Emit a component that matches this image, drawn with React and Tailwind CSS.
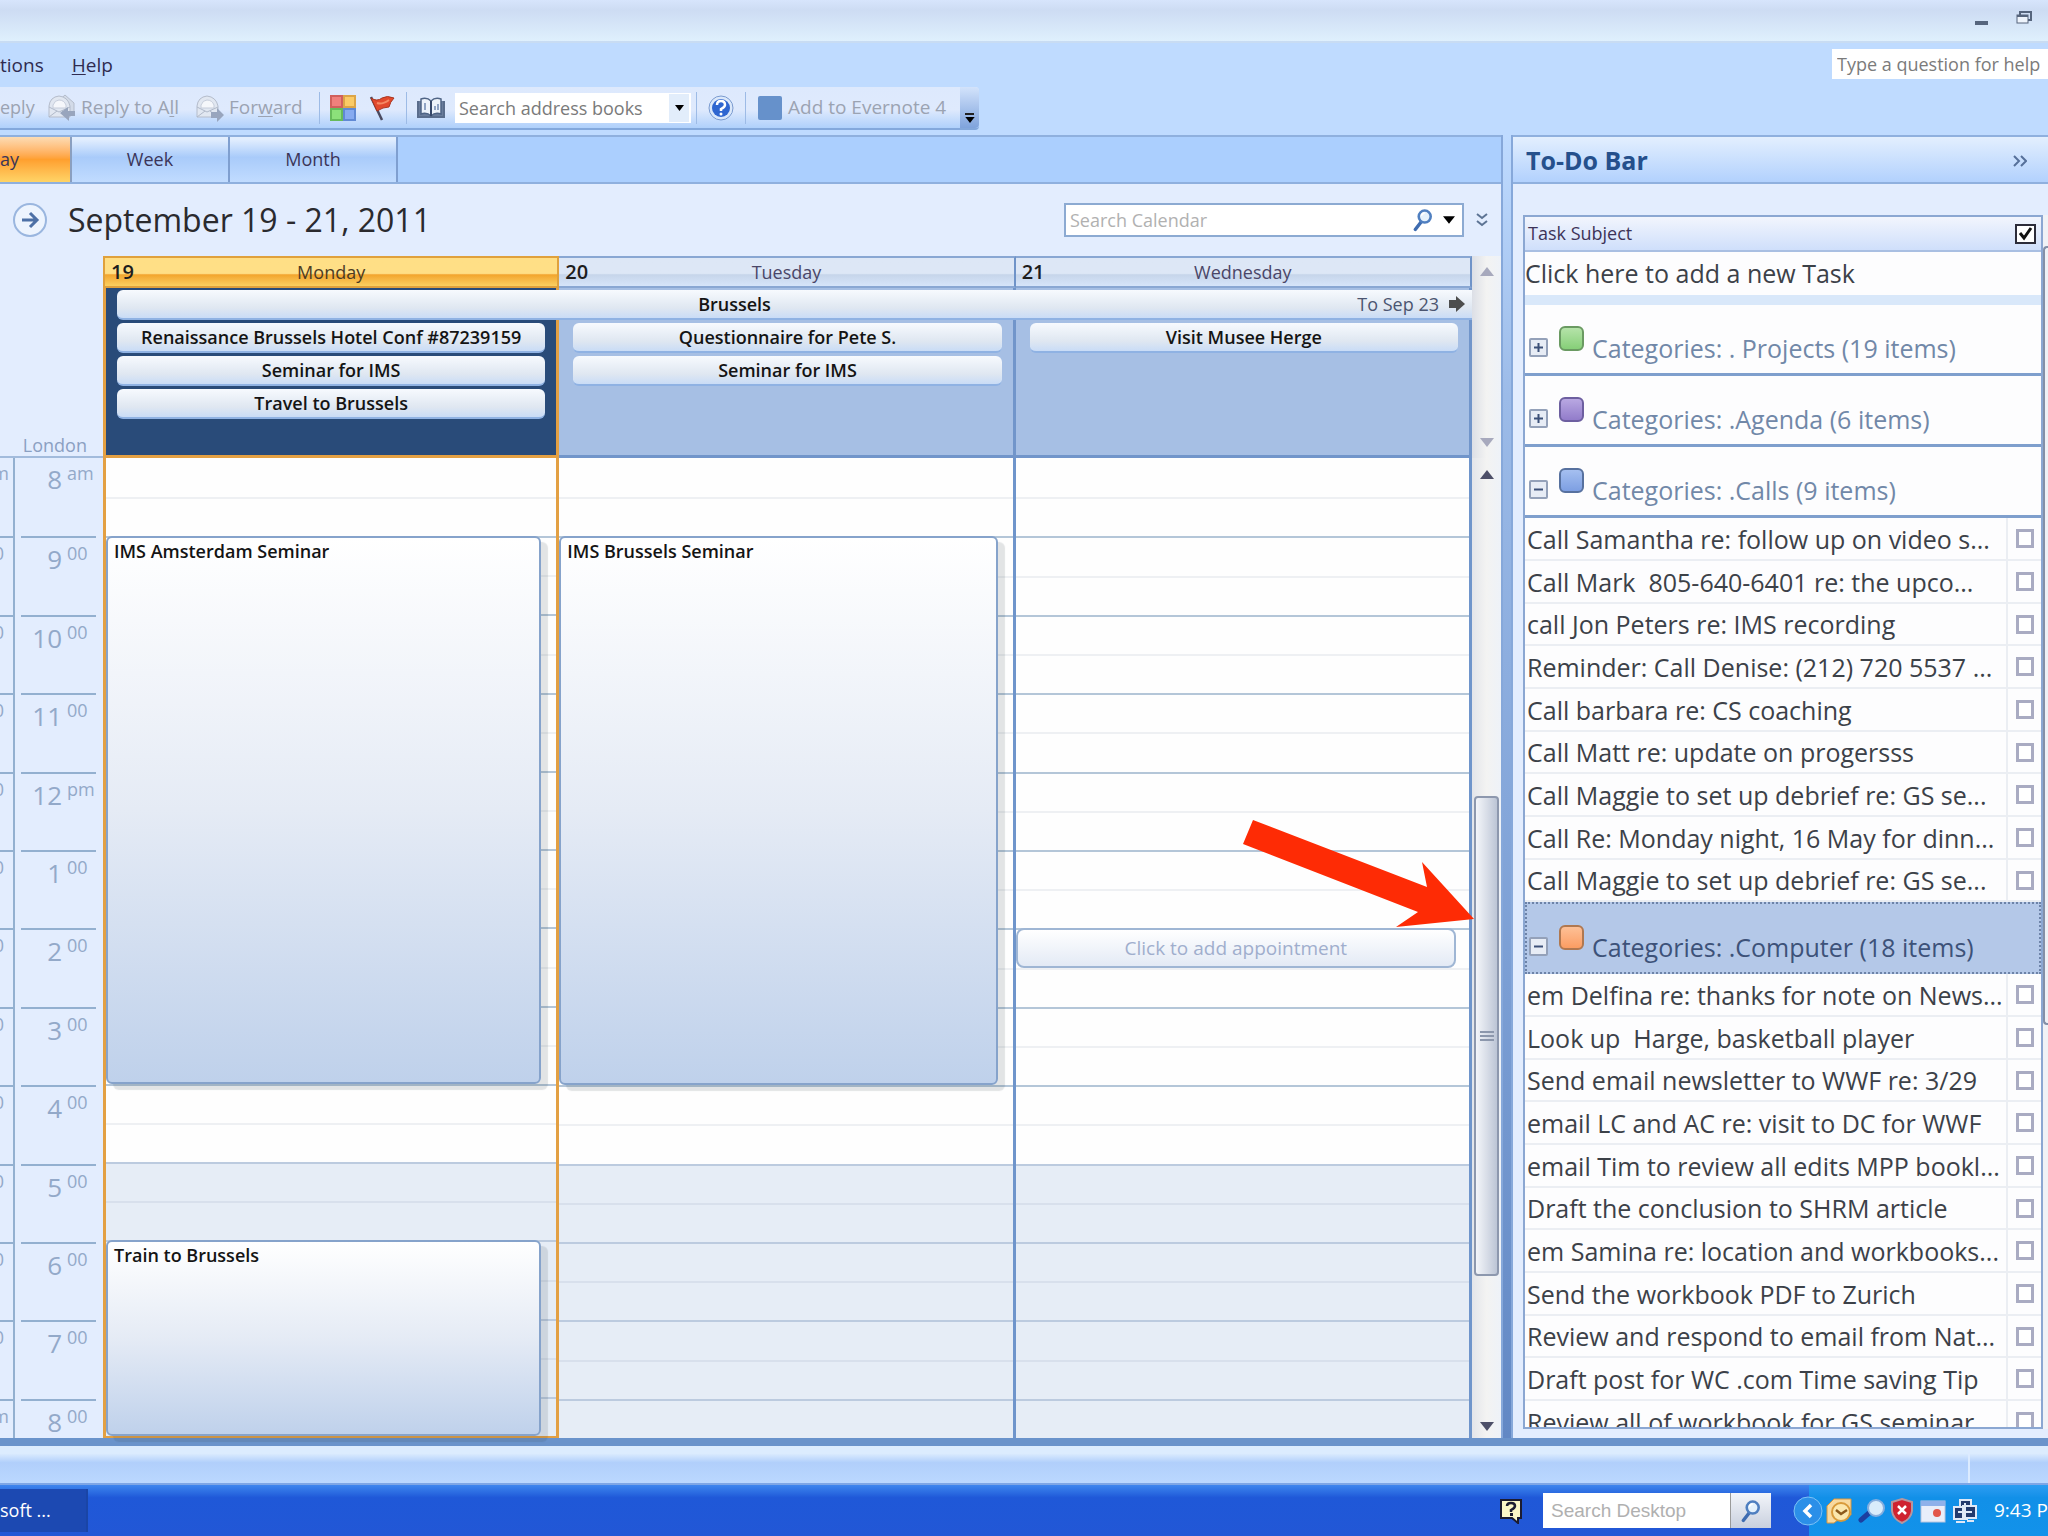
import React from 'react';

const HOURS = [
  ['8', 'am'], ['9', '00'], ['10', '00'], ['11', '00'], ['12', 'pm'], ['1', '00'], ['2', '00'],
  ['3', '00'], ['4', '00'], ['5', '00'], ['6', '00'], ['7', '00'], ['8', '00'],
];

// the neighbouring time zone is cut off by the window edge
const STUBS = ['am', '00', '00', '00', '00', '00', '00', '00', '00', '00', '00', '00', 'pm'];

const SLOTS = Array.from({ length: 25 }, (_, i) => i);

const CALLS = [
  'Call Samantha re: follow up on video s...',
  'Call Mark  805-640-6401 re: the upco...',
  'call Jon Peters re: IMS recording',
  'Reminder: Call Denise: (212) 720 5537 ...',
  'Call barbara re: CS coaching',
  'Call Matt re: update on progersss',
  'Call Maggie to set up debrief re: GS se...',
  'Call Re: Monday night, 16 May for dinn...',
  'Call Maggie to set up debrief re: GS se...',
];

const COMPUTER = [
  'em Delfina re: thanks for note on News...',
  'Look up  Harge, basketball player',
  'Send email newsletter to WWF re: 3/29',
  'email LC and AC re: visit to DC for WWF',
  'email Tim to review all edits MPP bookl...',
  'Draft the conclusion to SHRM article',
  'em Samina re: location and workbooks...',
  'Send the workbook PDF to Zurich',
  'Review and respond to email from Nat...',
  'Draft post for WC .com Time saving Tip',
  'Review all of workbook for GS seminar',
];

const Separator = () => <div className="h-8 w-px shrink-0 bg-[#9dbbe6]"></div>;

const Triangle = ({ up, className }) => (
  <svg viewBox="0 0 14 9" className={className} fill="currentColor">
    <path d={up ? 'M7 0 L14 9 H0 Z' : 'M7 9 L14 0 H0 Z'} />
  </svg>
);

const Envelope = ({ all }) => (
  <svg viewBox="0 0 28 28" className="h-7 w-7 shrink-0">
    {all && <path d="M8 9 L17 1 L26 9 V20 H8 Z" fill="#d3dbe8" stroke="#b4bccb" />}
    <path d="M1 12 Q2 3 11 2 Q20 3 22 12 V23 H1 Z" fill="#e1e7f1" stroke="#b4bccb" />
    <path d="M5 11 Q7 6 11 6 Q16 6 18 11 V14 H5 Z" fill="#f5f7fb" stroke="#c6cddb" />
    <path d="M1 13 L11 18 L22 13 M1 23 L9 17 M22 23 L14 17" fill="none" stroke="#b0b9c9" />
    {all ? (
      <path d="M12 19 L20 13 V17 H27 V22 H21 V27 Z" fill="#98a5bd" />
    ) : (
      <path d="M28 21 L21 14 V18 H15 V24 H21 V28 Z" fill="#98a5bd" />
    )}
  </svg>
);

const Magnifier = ({ className }) => (
  <svg viewBox="0 0 24 28" className={className}>
    <path d="M3 25 L10 16" stroke="#3f6cb0" strokeWidth="4" strokeLinecap="round" />
    <circle cx="14" cy="10" r="7" fill="#e4f1fc" stroke="#4f7fc0" strokeWidth="3" />
    <path d="M10 9 Q11 6 14 6" stroke="#ffffff" strokeWidth="2" fill="none" />
  </svg>
);

const TitleBar = () => (
  <header className="flex h-[41px] shrink-0 items-start justify-end gap-[28px] bg-linear-to-b from-[#d7e5fc] via-[#cddcf3] via-25% to-[#dff0fd] pr-4">
    <button aria-label="Minimize" className="mt-[21px] h-[4px] w-[13px] bg-[#56657d]"></button>
    <button aria-label="Restore" className="mt-[11px]">
      <svg viewBox="0 0 16 13" className="h-[13px] w-4">
        <path d="M4 4 V1 H15 V9 H12" fill="none" stroke="#56657d" strokeWidth="2" />
        <rect x="1" y="4" width="11" height="8" fill="#eef4fc" stroke="#56657d" />
        <rect x="1" y="4" width="11" height="2" fill="#56657d" />
      </svg>
    </button>
  </header>
);

const MenuBar = () => (
  <nav className="flex h-[46px] shrink-0 items-center justify-between border-t-2 border-[#c8dcf3] text-[19px] text-[#2f2b50]">
    <div className="flex gap-7">
      <button>tions</button>
      <button><span className="underline underline-offset-2">H</span>elp</button>
    </div>
    <input
      aria-label="Help search"
      placeholder="Type a question for help"
      className="mb-[2px] h-[30px] w-[216px] bg-white pl-[5px] text-[18px] placeholder:text-[#7b7b7b]"
    />
  </nav>
);

const Toolbar = () => (
  <div className="h-[48px] shrink-0">
    <div className="flex h-[43px] w-[979px] items-center rounded-r-sm border-b-2 border-[#83a8dc] bg-linear-to-b from-[#dde9fd] via-[#dfeafd] via-55% to-[#afd0fb] text-[19px] text-[#9ba3b2]">
      <button className="w-12 text-left text-[18px]">eply</button>
      <button className="flex w-[148px] items-center gap-[5px] whitespace-nowrap">
        <Envelope all />
        <span>Reply to A<span className="underline underline-offset-2">l</span>l</span>
      </button>
      <button className="flex w-[123px] items-center gap-[5px]">
        <Envelope />
        <span>For<span className="underline underline-offset-2">w</span>ard</span>
      </button>
      <Separator />
      <button aria-label="Categorize" className="ml-[10px]">
        <svg viewBox="0 0 26 26" className="h-[26px] w-[26px]">
          <rect x="1" y="1" width="11" height="11" fill="#f0807c" stroke="#d0605c" strokeWidth="2" />
          <rect x="14" y="1" width="11" height="11" fill="#fbcb66" stroke="#dca548" strokeWidth="2" />
          <rect x="1" y="14" width="11" height="11" fill="#8ce07a" stroke="#66ba5a" strokeWidth="2" />
          <rect x="14" y="14" width="11" height="11" fill="#86aaf0" stroke="#6089d4" strokeWidth="2" />
        </svg>
      </button>
      <button aria-label="Follow up" className="mr-[11px] ml-[13px]">
        <svg viewBox="0 0 26 26" className="h-[26px] w-[26px]">
          <path d="M2 2 L13 25" stroke="#4a4a60" strokeWidth="2.5" />
          <path d="M2 3 Q8 7 13 3 Q18 0 25 3 Q21 7 20 12 Q14 12 8 16 Z" fill="#e2492c" stroke="#a83520" />
          <path d="M8 8 Q13 10 20 5" stroke="#f58a64" strokeWidth="2" fill="none" />
        </svg>
      </button>
      <Separator />
      <button aria-label="Address book" className="mx-[10px]">
        <svg viewBox="0 0 28 24" className="h-6 w-7">
          <path d="M1 5 V21 H27 V5" fill="#6a7d9c" stroke="#5a6d8c" strokeWidth="2" />
          <path d="M4 3 Q10 1 14 5 Q18 1 24 3 V18 Q18 16 14 20 Q10 16 4 18 Z" fill="#edf3fb" stroke="#4f6485" strokeWidth="1.5" />
          <path d="M14 5 V20" stroke="#36486a" strokeWidth="2" />
          <path d="M8 7 V14 M18 10 V14 M21 8 V14" stroke="#90a4c4" strokeWidth="2" />
        </svg>
      </button>
      <div className="flex h-[30px] w-[236px] items-center bg-white">
        <input
          aria-label="Search address books"
          placeholder="Search address books"
          className="h-full w-[214px] pl-[4px] text-[18px] placeholder:text-[#7a7a7a]"
        />
        <button aria-label="Show address books" className="flex h-[28px] w-[20px] items-center justify-center bg-[#e2edfb] text-black">
          <Triangle className="h-[6px] w-[9px]" />
        </button>
      </div>
      <div className="ml-[5px]"><Separator /></div>
      <button aria-label="Help" className="mx-[11px]">
        <svg viewBox="0 0 26 26" className="h-[26px] w-[26px]">
          <circle cx="13" cy="13" r="12" fill="#dbe8fa" stroke="#7a9bd0" />
          <circle cx="13" cy="13" r="9" fill="#2f66d0" />
          <path d="M9 10 Q9 6 13 6 Q17 6 17 10 Q17 12 13 14 V16" stroke="#ffffff" strokeWidth="2.5" fill="none" />
          <circle cx="13" cy="19" r="1.5" fill="#ffffff" />
        </svg>
      </button>
      <Separator />
      <button className="ml-3 flex flex-1 items-center gap-[6px] whitespace-nowrap">
        <span className="h-6 w-6 rounded-xs bg-[#6691cb]"></span>
        Add to Evernote 4
      </button>
      <button aria-label="Toolbar options" className="flex h-full w-[19px] flex-col items-center justify-end gap-[2px] rounded-r-sm bg-linear-to-b from-[#d3e3fb] to-[#7fa3dc] pb-[5px] text-black">
        <span className="h-[2px] w-[9px] bg-[#222]"></span>
        <Triangle className="h-[6px] w-[10px]" />
      </button>
    </div>
  </div>
);

const AllDay = ({ className, children }) => (
  <button className={`z-10 mt-[2px] h-[30px] rounded-md border-b-2 border-[#8fb2e3] bg-linear-to-b from-[#f7fafe] via-[#dfe7f1] via-65% to-[#c9dcf6] text-center text-[18px] leading-[28px] font-semibold whitespace-nowrap text-[#141414] ${className}`}>
    {children}
  </button>
);

const Appointment = ({ className, children }) => (
  <button className={`z-10 mr-[15px] flex items-start rounded-md border-2 border-[#86a3cb] bg-linear-to-b from-white via-[#e5ebf5] to-[#bfd1eb] px-[6px] text-left text-[18px] leading-[26px] font-semibold text-[#141414] shadow-[7px_6px_1px_rgba(60,70,80,0.14)] ${className}`}>
    {children}
  </button>
);

const DayHeader = ({ number, name, today }) => (
  <div
    className={
      today
        ? 'relative h-8 border-2 border-[#e0a13c] bg-linear-to-b from-[#ffdf86] from-55% via-[#f2a52c] via-60% to-[#fbd060] text-center text-[18px] leading-[28px] text-[#4c3b24]'
        : 'relative h-8 border-t-2 border-r-2 border-b-2 border-[#89a7d3] border-r-[#6f93c8] bg-linear-to-b from-[#dde7f6] from-55% via-[#c6d5ea] via-60% to-[#d6e5fa] text-center text-[18px] leading-[28px] text-[#4a4668]'
    }
  >
    <span className="absolute left-[6px] text-[20px] font-semibold text-[#1d1d1d]">{number}</span>
    {name}
  </div>
);

// half-hour lines of one day, the working hours stop at slot 18
const slotClass = (i) => {
  const work = i < 18;
  if (i === 0) return 'bg-[#fefefe]';
  if (i % 2) {
    return work ? 'border-t-2 border-[#eef0f3] bg-[#fefefe]' : 'border-t-2 border-[#d8e0ec] bg-[#e6edf6]';
  }
  return work ? 'border-t-2 border-[#b4c6d8] bg-[#fefefe]' : 'border-t-2 border-[#bccbdf] bg-[#e6edf6]';
};

const DayColumn = ({ today, children }) => (
  <div
    className={
      today
        ? 'grid min-h-0 grid-rows-[repeat(25,minmax(0,1fr))] border-x-[3px] border-b-2 border-[#e3a043]'
        : 'grid min-h-0 grid-rows-[repeat(25,minmax(0,1fr))] border-r-3 border-[#6f95cb]'
    }
  >
    {SLOTS.map((i) => (
      <div key={i} style={{ gridRow: i + 1, gridColumn: 1 }} className={slotClass(i)}></div>
    ))}
    {children}
  </div>
);

const Calendar = () => (
  <section className="flex min-w-0 flex-1 flex-col border-r-2 border-[#86a8da] bg-[#e3edfe]">
    <div className="flex h-[49px] shrink-0 border-y-2 border-[#8fb0de] bg-[#abcffe] text-[18px] text-[#3b3558]">
      <button className="w-[72px] border-r-2 border-[#8a9fc0] bg-linear-to-b from-[#fcdcb4] via-[#ff9f2e] via-50% to-[#ffd466] text-left">ay</button>
      <button className="w-[158px] border-r-2 border-[#7f9fd0] bg-linear-to-b from-[#e2eefe] from-5% via-[#a9cbfa] via-45% to-[#c1dcff]">Week</button>
      <button className="w-[168px] border-r-2 border-[#7f9fd0] bg-linear-to-b from-[#e2eefe] from-5% via-[#a9cbfa] via-45% to-[#c1dcff]">Month</button>
    </div>

    <div className="flex h-[72px] shrink-0 items-center pl-3">
      <button aria-label="Next days">
        <svg viewBox="0 0 36 36" className="h-9 w-9">
          <circle cx="18" cy="18" r="16" fill="#edf4fe" stroke="#9ab6df" strokeWidth="2" />
          <path d="M10 18 H25 M18 11 L25 18 L18 25" stroke="#4d70a6" strokeWidth="3" fill="none" />
        </svg>
      </button>
      <h1 className="ml-5 flex-1 text-[32px] text-[#2a2a2e]">September 19 - 21, 2011</h1>
      <div className="flex h-[34px] w-[400px] items-center border-2 border-[#8caad2] bg-white">
        <input
          aria-label="Search Calendar"
          placeholder="Search Calendar"
          className="min-w-0 flex-1 pl-[4px] text-[18px] placeholder:text-[#b1b1b1]"
        />
        <button aria-label="Search"><Magnifier className="h-6 w-[22px]" /></button>
        <button aria-label="Search options" className="mr-[7px] ml-[9px] text-black"><Triangle className="h-2 w-3" /></button>
      </div>
      <button aria-label="Expand search" className="mr-[13px] ml-[12px]">
        <svg viewBox="0 0 12 14" className="h-[14px] w-3">
          <path d="M1 1 L6 5 L11 1 M1 8 L6 12 L11 8" fill="none" stroke="#5d7494" strokeWidth="2" />
        </svg>
      </button>
    </div>

    <div className="grid shrink-0 grid-cols-[103px_minmax(0,1fr)_29px]">
      <div className="flex items-end justify-end border-b-2 border-[#a2bbdc] pr-4 text-[18px] leading-[22px] text-[#8ba0c2]">London</div>
      <div>
        <div className="grid grid-cols-3">
          <DayHeader number="19" name="Monday" today />
          <DayHeader number="20" name="Tuesday" />
          <DayHeader number="21" name="Wednesday" />
        </div>
        <div className="grid h-[170px] grid-cols-3 grid-rows-[repeat(4,30px)_1fr] gap-y-[3px]">
          <div className="col-start-1 row-span-full row-start-1 border-x-[3px] border-b-3 border-[#e3a043] bg-[#294b79]"></div>
          <div className="col-start-2 row-span-full row-start-1 border-r-3 border-b-3 border-[#7195ca] bg-[#a6bfe4]"></div>
          <div className="col-start-3 row-span-full row-start-1 border-r-3 border-b-3 border-[#7195ca] bg-[#a6bfe4]"></div>
          <AllDay className="relative col-span-3 col-start-1 row-start-1 ml-[14px] rounded-r-none pr-[120px]">
            Brussels
            <span className="absolute top-0 right-[7px] flex items-center gap-[10px] font-normal text-[#4b5570]">
              To Sep 23
              <svg viewBox="0 0 16 16" className="h-4 w-4"><path d="M0 4 H7 V0 L16 8 L7 16 V12 H0 Z" fill="#4d4d4d" /></svg>
            </span>
          </AllDay>
          <AllDay className="col-start-1 row-start-2 mx-[14px]">Renaissance Brussels Hotel Conf #87239159</AllDay>
          <AllDay className="col-start-1 row-start-3 mx-[14px]">Seminar for IMS</AllDay>
          <AllDay className="col-start-1 row-start-4 mx-[14px]">Travel to Brussels</AllDay>
          <AllDay className="col-start-2 row-start-2 mx-[14px]">Questionnaire for Pete S.</AllDay>
          <AllDay className="col-start-2 row-start-3 mx-[14px]">Seminar for IMS</AllDay>
          <AllDay className="col-start-3 row-start-2 mx-[14px]">Visit Musee Herge</AllDay>
        </div>
      </div>
      <div className="flex flex-col items-center justify-between bg-linear-to-r from-[#dcdfe6] via-[#f3f3f2] to-[#eef2f8] pt-[11px] pb-[11px] text-[#a7a9bd]">
        <Triangle up className="h-[9px] w-[14px]" />
        <Triangle className="h-[9px] w-[14px]" />
      </div>
    </div>

    <div className="relative grid min-h-0 flex-1 grid-cols-[103px_minmax(0,1fr)_29px]">
      <div className="grid min-h-0 grid-cols-[15px_1fr] grid-rows-[repeat(25,minmax(0,1fr))] text-[#93a9c9]">
        {HOURS.map(([hour, suffix], i) => (
          <React.Fragment key={i}>
            <div
              style={{ gridRow: i === 12 ? '25' : `${i * 2 + 1} / span 2` }}
              className={`col-start-1 flex items-start justify-end border-r-2 border-r-[#93b0d0] pt-[2px] text-[18px] leading-[26px] ${i ? 'border-t-2 border-t-[#93b0d0]' : ''} ${STUBS[i] === '00' ? 'pr-[9px]' : 'pr-[4px]'}`}
            >
              {STUBS[i]}
            </div>
            <div
              style={{ gridRow: i === 12 ? '25' : `${i * 2 + 1} / span 2` }}
              className={`col-start-2 mr-[7px] ml-[6px] flex items-start overflow-hidden ${i ? 'border-t-2 border-[#93b0d0]' : ''}`}
            >
              <span className="w-[41px] pt-1 text-right text-[26px] leading-[34px]">{hour}</span>
              <span className="ml-[5px] pt-[2px] text-[18px] leading-[26px]">{suffix}</span>
            </div>
          </React.Fragment>
        ))}
      </div>
      <div className="grid min-h-0 grid-cols-3">
        <DayColumn today>
          <Appointment className="col-start-1 row-start-3 row-end-17">IMS Amsterdam Seminar</Appointment>
          <Appointment className="col-start-1 row-start-21 row-end-26">Train to Brussels</Appointment>
        </DayColumn>
        <DayColumn>
          <Appointment className="col-start-1 row-start-3 row-end-17">IMS Brussels Seminar</Appointment>
        </DayColumn>
        <DayColumn>
          <button className="z-10 col-start-1 row-start-13 mr-[13px] rounded-lg border-2 border-[#9fb6d4] bg-linear-to-b from-white to-[#e3eaf5] text-[19px] text-[#a0aecd]">
            Click to add appointment
          </button>
        </DayColumn>
      </div>
      <div className="flex min-h-0 flex-col items-center bg-linear-to-r from-[#e3e5ea] via-[#f3f3f2] to-[#eef2f8] text-[#4d4f68]">
        <div className="flex h-6 items-center pt-2"><Triangle up className="h-[9px] w-[14px]" /></div>
        <div className="grow-[315] basis-0"></div>
        <div className="flex w-[25px] grow-[478] basis-0 flex-col items-center justify-center gap-[2px] rounded-sm border-2 border-[#8d98ae] bg-linear-to-r from-[#f4f6fa] via-[#d9dee8] to-[#bcc5d6]">
          <span className="h-[2px] w-[14px] bg-[#8c97ac]"></span>
          <span className="h-[2px] w-[14px] bg-[#8c97ac]"></span>
          <span className="h-[2px] w-[14px] bg-[#8c97ac]"></span>
        </div>
        <div className="grow-[138] basis-0"></div>
        <div className="flex h-6 items-center"><Triangle className="h-[9px] w-[14px]" /></div>
      </div>
      <svg viewBox="0 0 231 108" className="absolute top-[362px] right-[27px] z-20 h-[108px] w-[231px]">
        <path d="M10 0 L184 67 L179 42 L231 99 L153 107 L175 92 L0 24 Z" fill="#fe2b05" />
      </svg>
    </div>
  </section>
);

const SWATCHES = {
  green: 'border-[#6a9a62] bg-linear-to-b from-[#b5e3a9] to-[#86cf78]',
  purple: 'border-[#6d5fa0] bg-linear-to-b from-[#b9a8e2] to-[#927cca]',
  blue: 'border-[#57719f] bg-linear-to-b from-[#a5bff0] to-[#7d9fe2]',
  orange: 'border-[#b07850] bg-linear-to-b from-[#fdc096] to-[#fb9d62]',
};

const Category = ({ color, open, selected, children }) => (
  <tr className={selected ? 'bg-[#b4c8e8]' : ''}>
    <td
      colSpan={2}
      className={
        selected
          ? 'h-[72px] border-2 border-dotted border-[#6d83a8] p-0 text-[#3d5279]'
          : 'h-[71px] border-b-3 border-[#7f9fcd] p-0 pl-[2px] text-[#7188a8]'
      }
    >
      <button className="flex w-full items-center pt-2 pl-[2px] text-[25px]">
        <span className="mt-2 flex h-[19px] w-[19px] items-center justify-center rounded-xs border-2 border-[#94a1b9] bg-[#e7ecf5]">
          <svg viewBox="0 0 11 11" className="h-[11px] w-[11px]">
            <path d={open ? 'M1 5.5 H10' : 'M1 5.5 H10 M5.5 1 V10'} stroke="#3c5078" strokeWidth="2" />
          </svg>
        </span>
        <span className={`mr-[8px] mb-[10px] ml-[11px] h-[25px] w-[25px] rounded-md border-2 ${SWATCHES[color]}`}></span>
        <span className="pt-[10px] leading-[34px]">{children}</span>
      </button>
    </td>
  </tr>
);

const TaskRows = ({ tasks, group }) =>
  tasks.map((task, i) => (
    <tr key={i} className="h-[43px] nth-[3n]:h-[42px]">
      <td className="border-r-2 border-b-2 border-[#ebeef3] p-0 pl-[2px] text-[25px] leading-[34px] whitespace-pre text-[#3c4148]">
        <label htmlFor={`${group}-${i}`}>{task}</label>
      </td>
      <td className="w-[33px] border-b-2 border-[#ebeef3] p-0">
        <input
          type="checkbox"
          id={`${group}-${i}`}
          className="mx-auto block h-[19px] w-[18px] appearance-none border-3 border-[#a9abc2] bg-white"
        />
      </td>
    </tr>
  ));

const TodoBar = () => (
  <aside className="flex w-[537px] shrink-0 flex-col border-l-2 border-[#86a8da] bg-[#e3edfe]">
    <div className="flex h-[49px] shrink-0 items-center justify-between border-y-2 border-[#8fb0de] bg-linear-to-b from-[#e3effe] to-[#b2d1fd] pt-[2px] pr-[21px] pl-[13px]">
      <h2 className="text-[25px] font-bold text-[#25508c]">To-Do Bar</h2>
      <button aria-label="Collapse" className="text-[#56709a]">
        <svg viewBox="0 0 14 12" className="h-3 w-[14px]">
          <path d="M1 1 L6 6 L1 11 M8 1 L13 6 L8 11" fill="none" stroke="currentColor" strokeWidth="2" />
        </svg>
      </button>
    </div>
    <div className="mt-[31px] mb-[9px] ml-[10px] flex min-h-0 flex-1 overflow-hidden">
      <div className="min-w-0 flex-1 overflow-hidden border-2 border-[#8ba7d2] bg-[#fdfdfe]">
        <div className="flex h-[35px] items-center justify-between border-b-2 border-[#a9bfe2] bg-linear-to-b from-[#f2f5fd] to-[#cfdffb] pr-[5px] pl-[3px] text-[18px] text-[#3d3358]">
          <label htmlFor="all-done">Task Subject</label>
          <div className="relative h-[20px] w-[21px]">
            <input type="checkbox" id="all-done" defaultChecked className="block h-full w-full appearance-none border-2 border-[#2c2c3a] bg-white" />
            <svg viewBox="0 0 21 20" className="pointer-events-none absolute inset-0 h-full w-full">
              <path d="M5 9 L9 14 L16 4" fill="none" stroke="#111" strokeWidth="3" />
            </svg>
          </div>
        </div>
        <button className="block h-[43px] w-full text-left text-[25px] text-[#3c4148]">Click here to add a new Task</button>
        <div className="h-[10px] bg-[#d9e8fa]"></div>
        <table className="w-full border-separate border-spacing-0">
          <tbody>
            <Category color="green">Categories: . Projects (19 items)</Category>
            <Category color="purple">Categories: .Agenda (6 items)</Category>
            <Category color="blue" open>Categories: .Calls (9 items)</Category>
          </tbody>
          <tbody><TaskRows tasks={CALLS} group="calls" /></tbody>
          <tbody><Category color="orange" open selected>Categories: .Computer (18 items)</Category></tbody>
          <tbody><TaskRows tasks={COMPUTER} group="computer" /></tbody>
        </table>
      </div>
      <div className="flex w-[5px] shrink-0 flex-col bg-[#f0f2f6] pt-[31px]">
        <div className="grow-[778] rounded-l-sm border-y-2 border-l-2 border-[#8490a8] bg-[#eef1f6]"></div>
        <div className="grow-[405]"></div>
      </div>
    </div>
  </aside>
);

const StatusBar = () => (
  <footer className="flex h-[39px] shrink-0 justify-end border-b-2 border-[#7ea6e6] bg-linear-to-b from-[#dcecfe] from-20% via-[#b1cffb] via-45% to-[#bbd8ff] pr-[78px]">
    <div className="h-full w-[2px] bg-[#dcebff]"></div>
  </footer>
);

const Taskbar = () => (
  <div className="flex h-[51px] shrink-0 items-center bg-linear-to-b from-[#3f86ee] via-[#1f58d8] via-25% to-[#2257d6] text-white">
    <button className="mr-auto h-[43px] w-[88px] border-r-2 border-[#1a45a6] bg-[#1c49b2] text-left text-[18px]">soft ...</button>
    <button aria-label="Help topics" className="mr-[20px]">
      <svg viewBox="0 0 24 26" className="h-[26px] w-6">
        <path d="M2 2 H22 V20 H19 V25 L13 20 H2 Z" fill="#fbf7c8" stroke="#1c1c30" strokeWidth="2" />
        <path d="M8 8 Q8 5 12 5 Q16 5 16 8 Q16 10 12 12 V14" fill="none" stroke="#1c1c30" strokeWidth="2.5" />
        <rect x="11" y="15" width="3" height="3" fill="#1c1c30" />
      </svg>
    </button>
    <input
      aria-label="Search Desktop"
      placeholder="Search Desktop"
      className="h-[35px] w-[187px] bg-white pl-[8px] font-['Liberation_Sans',sans-serif] text-[19px] placeholder:text-[#b0b0b0]"
    />
    <button aria-label="Search" className="mr-[38px] flex h-[35px] w-[41px] items-center justify-center border-l border-[#9a9a9a] bg-linear-to-b from-[#f3f5fa] to-[#c9d0de]">
      <Magnifier className="h-6 w-[22px]" />
    </button>
    {/* the round button straddles the left edge of the tray */}
    <div className="flex h-full items-center bg-linear-to-b from-[#2b9df2] via-[#1190e8] via-25% to-[#1292ea]">
      <button aria-label="Show hidden icons" className="-ml-4 flex items-center">
        <svg viewBox="0 0 30 30" className="h-[30px] w-[30px]">
          <circle cx="15" cy="15" r="14" fill="#2b8fe8" stroke="#7cc2f6" />
          <path d="M18 9 L12 15 L18 21" fill="none" stroke="#ffffff" strokeWidth="3.5" />
        </svg>
      </button>
      <svg viewBox="0 0 26 26" className="ml-[3px] h-[26px] w-[26px]">
        <path d="M8 1 H25 V17 H18 L8 25 H1 V8 Z" fill="#f7d9a0" stroke="#d9963c" />
        <circle cx="15" cy="14" r="9" fill="#fbe7ae" stroke="#d89a3a" strokeWidth="2" />
        <path d="M10 12 L15 16 L21 12" fill="none" stroke="#8c5a1c" strokeWidth="2.5" />
      </svg>
      <svg viewBox="0 0 28 26" className="ml-[6px] h-[26px] w-7">
        <path d="M3 22 L11 15" stroke="#1c3fa0" strokeWidth="5" strokeLinecap="round" />
        <circle cx="18" cy="10" r="8" fill="#d9ecfb" stroke="#86aede" strokeWidth="2" />
      </svg>
      <svg viewBox="0 0 24 26" className="ml-[4px] h-[26px] w-6">
        <path d="M12 1 L22 4 V13 Q21 21 12 25 Q3 21 2 13 V4 Z" fill="#cf2230" stroke="#b5969f" strokeWidth="2" />
        <path d="M8 8 L16 16 M16 8 L8 16" stroke="#ffffff" strokeWidth="2.5" />
      </svg>
      <svg viewBox="0 0 26 24" className="ml-[6px] h-6 w-[26px]">
        <rect x="1" y="2" width="24" height="21" fill="#e9eefa" stroke="#b9c6e0" />
        <rect x="1" y="2" width="24" height="5" fill="#8fb1ea" />
        <circle cx="17" cy="14" r="4" fill="#e2564a" />
      </svg>
      <svg viewBox="0 0 26 26" className="ml-[6px] h-[26px] w-[26px]">
        <rect x="8" y="2" width="11" height="13" fill="#233a6e" stroke="#dfe8f7" strokeWidth="2" />
        <rect x="2" y="9" width="13" height="12" fill="#233a6e" stroke="#dfe8f7" strokeWidth="2" />
        <rect x="11" y="8" width="13" height="12" fill="#233a6e" stroke="#dfe8f7" strokeWidth="2" />
        <path d="M13 5 V20 M6 14 H20" stroke="#dfe8f7" strokeWidth="2" />
        <path d="M4 24 H13 M15 23 H22" stroke="#dfe8f7" strokeWidth="2" />
      </svg>
      <span className="ml-[16px] w-[54px] overflow-hidden text-[19px] whitespace-nowrap">9:43 PM</span>
    </div>
  </div>
);

const App = () => (
  <div className="flex h-screen flex-col overflow-hidden bg-[#bfdbff] font-['Open_Sans','Noto_Sans',sans-serif]">
    <TitleBar />
    <MenuBar />
    <Toolbar />
    <main className="flex min-h-0 flex-1 border-b-8 border-[#6a93cb]">
      <Calendar />
      <div className="w-2 shrink-0 bg-linear-to-b from-[#bfdbff] via-[#9cbbe8] via-20% to-[#6288c4]"></div>
      <TodoBar />
    </main>
    <StatusBar />
    <Taskbar />
  </div>
);

export default App;
